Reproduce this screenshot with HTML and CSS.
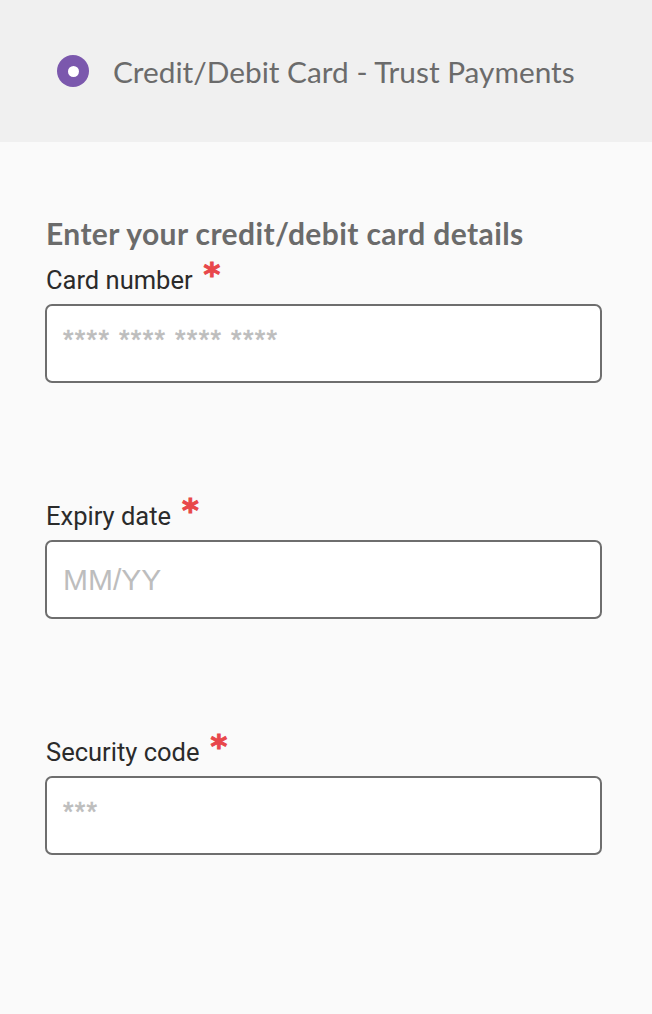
FILE: index.html
```html
<!DOCTYPE html>
<html>
<head>
<meta charset="utf-8">
<link rel="stylesheet" href="styles.css">
</head>
<body>
<div class="page">
  <div class="method">
    <span class="radio"><span class="radio-dot"></span></span>
    <span class="method-title">Credit/Debit Card - Trust Payments</span>
  </div>
  <div class="form">
    <h2 class="form-title">Enter your credit/debit card details</h2>
    <div class="field">
      <label class="label">Card number<span class="req">*</span></label>
      <div class="input"><span class="ph ph-stars">**** **** **** ****</span></div>
    </div>
    <div class="field">
      <label class="label">Expiry date<span class="req">*</span></label>
      <div class="input"><span class="ph ph-text">MM/YY</span></div>
    </div>
    <div class="field">
      <label class="label">Security code<span class="req">*</span></label>
      <div class="input"><span class="ph ph-stars">***</span></div>
    </div>
  </div>
</div>
</body>
</html>
```
FILE: styles.css
```css
html, body {
  margin: 0;
  padding: 0;
  background: #fafafa;
}
.page {
  width: 652px;
  min-height: 1014px;
  background: #fafafa;
}
.method {
  height: 142px;
  background: #f0f0f0;
  display: flex;
  align-items: center;
  padding-left: 57px;
  box-sizing: border-box;
}
.radio {
  width: 32px;
  height: 32px;
  border-radius: 50%;
  background: #7b58ad;
  display: flex;
  align-items: center;
  justify-content: center;
  flex-shrink: 0;
}
.radio-dot {
  width: 11px;
  height: 11px;
  border-radius: 50%;
  background: #fff;
}
.method-title {
  margin-left: 24px;
  font-family: Lato, sans-serif;
  font-size: 29.8px;
  color: #6b6b6b;
}
.form {
  padding: 71px 50px 0 45px;
}
.form-title {
  margin: 0 0 12px 1px;
  font-family: Lato, sans-serif;
  font-weight: 700;
  font-size: 30px;
  letter-spacing: 0.4px;
  line-height: 40px;
  color: #6b6b6b;
}
.field {
  margin-bottom: 118px;
}
.label {
  display: block;
  margin: 0 0 9px 1px;
  font-family: Roboto, sans-serif;
  font-size: 25.5px;
  line-height: 30px;
  height: 30px;
  color: #2b2b2b;
}
.req {
  color: #e8474a;
  font-family: "DejaVu Sans", sans-serif;
  font-weight: 700;
  font-size: 32px;
  line-height: 0;
  margin-left: 11px;
  vertical-align: 4px;
  -webkit-text-stroke: 1px #e8474a;
}
.input {
  height: 79px;
  border: 2px solid #6e6e6e;
  border-radius: 7px;
  background: #fff;
  box-sizing: border-box;
  display: flex;
  align-items: center;
  padding-left: 16px;
}
.ph {
  color: #bdbdbd;
  font-family: "Liberation Sans", Arial, sans-serif;
}
.ph-stars {
  font-size: 27px;
  letter-spacing: 1.3px;
  margin-top: -6px;
  -webkit-text-stroke: 0.6px #bdbdbd;
}
.ph-text {
  font-size: 30px;
}
```
